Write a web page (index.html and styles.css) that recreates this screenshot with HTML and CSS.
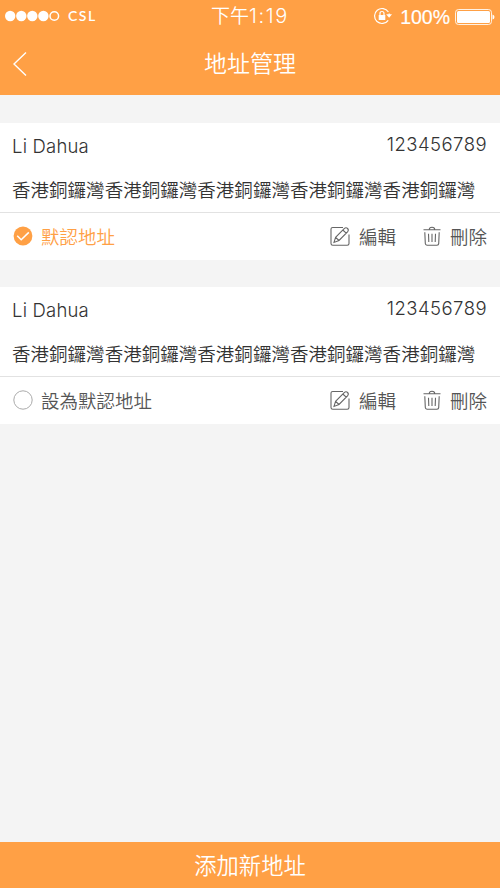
FILE: index.html
```html
<!DOCTYPE html>
<html lang="zh-Hant">
<head>
<meta charset="utf-8">
<title>地址管理</title>
<link rel="stylesheet" href="styles.css">
</head>
<body>
<svg class="defs" width="0" height="0">
  <symbol id="edit" viewBox="0 0 20 20">
    <path d="M13 1.500H2.700Q1 1.500 1 3V17.500Q1 19.200 2.700 19.200H17.300Q19 19.200 19 17.500V8.500"/>
    <path d="M4 16.400L5.600 11.300L14.200 2.600Q16 1 17.600 2.500Q19.100 4 17.500 5.800L9 14.500ZM5.600 11.300L9 14.500M12.800 4L16.200 7.200"/>
  </symbol>
  <symbol id="trash" viewBox="0 0 18 20">
    <path d="M.5 3.700H17.500M6.300 3.500Q6.300 1.200 9 1.200Q11.700 1.200 11.700 3.500M1.800 6.200L2.300 17.600Q2.400 19.200 4 19.200H14Q15.600 19.200 15.700 17.600L16.200 6.200M5.500 7.800L5.800 16M9 7.800V16M12.500 7.800L12.200 16"/>
  </symbol>
</svg>
<div class="screen">
  <header class="header">
    <div class="status">
      <div class="carrier">
        <svg width="56" height="12" viewBox="0 0 56 12"><g fill="#fff"><circle cx="5.200" cy="6" r="5.200"/><circle cx="16.300" cy="6" r="5.200"/><circle cx="27.300" cy="6" r="5.200"/><circle cx="38.400" cy="6" r="5.200"/></g><circle cx="49.300" cy="6" r="4.300" fill="none" stroke="#fff" stroke-width="1.500"/></svg>
        <span class="carrier-name">CSL</span>
      </div>
      <div class="time">下午<span class="clock">1:19</span></div>
      <div class="power">
        <svg class="lock" width="20" height="18" viewBox="0 0 20 18"><path d="M15.400 5A7.500 7.500 0 1 0 15.200 13.300M16.200 8V6.600" fill="none" stroke="#fff" stroke-width="1.200"/><path d="M13.200 7.300H19L16.100 10.800Z" fill="#fff"/><rect x="5.700" y="8" width="6.600" height="5" rx=".5" fill="#fff"/><path d="M7 8V6.500Q7 4.500 9 4.500Q11 4.500 11 6.500V8" fill="none" stroke="#fff" stroke-width="1.200"/></svg>
        <span class="percent">100%</span>
        <svg class="battery" width="40" height="16" viewBox="0 0 40 16"><rect x=".5" y=".5" width="36" height="15" rx="3" fill="none" stroke="#fff" stroke-opacity=".85"/><rect x="2" y="2" width="33" height="12" rx="1.500" fill="#fff"/><path d="M37.500 5.500Q39.500 6 39.500 8Q39.500 10 37.500 10.500Z" fill="#fff"/></svg>
      </div>
    </div>
    <div class="nav">
      <svg class="back" width="14" height="24" viewBox="0 0 14 24"><path d="M13 .5L1 12L13 23.500" fill="none" stroke="#fff" stroke-width="1.400"/></svg>
      <h1 class="title">地址管理</h1>
    </div>
  </header>
  <main class="list">
    <section class="card">
      <div class="info">
        <div class="person"><span class="name">Li Dahua</span><span class="phone">123456789</span></div>
        <div class="address">香港銅鑼灣香港銅鑼灣香港銅鑼灣香港銅鑼灣香港銅鑼灣</div>
      </div>
      <div class="actions">
        <div class="choice selected"><svg width="20" height="20" viewBox="0 0 20 20"><circle cx="10" cy="10" r="9.400" fill="#ffa045"/><path d="M4.200 9.800L8.200 13.800L15.800 6.400" fill="none" stroke="#fff" stroke-width="1.500"/></svg><span>默認地址</span></div>
        <div class="action edit"><svg class="icon" width="20" height="20"><use href="#edit"/></svg><span>編輯</span></div>
        <div class="action"><svg class="icon" width="18" height="20"><use href="#trash"/></svg><span>刪除</span></div>
      </div>
    </section>
    <section class="card">
      <div class="info">
        <div class="person"><span class="name">Li Dahua</span><span class="phone">123456789</span></div>
        <div class="address">香港銅鑼灣香港銅鑼灣香港銅鑼灣香港銅鑼灣香港銅鑼灣</div>
      </div>
      <div class="actions">
        <div class="choice"><svg width="20" height="20" viewBox="0 0 20 20"><circle cx="10" cy="10" r="9.200" fill="#fff" stroke="#aaa"/></svg><span>設為默認地址</span></div>
        <div class="action edit"><svg class="icon" width="20" height="20"><use href="#edit"/></svg><span>編輯</span></div>
        <div class="action"><svg class="icon" width="18" height="20"><use href="#trash"/></svg><span>刪除</span></div>
      </div>
    </section>
  </main>
  <footer class="add">添加新地址</footer>
</div>
</body>
</html>
```
FILE: styles.css
```css
* { box-sizing: border-box; }
body {
  margin: 0;
  background: #f4f4f4;
  color: #333;
  font-family: Inter, "Noto Sans CJK TC", sans-serif;
  font-weight: 350;
  font-size: 18.5px;
}
svg { display: block; flex: none; }
.defs { position: absolute; }
.screen { height: 888px; display: flex; flex-direction: column; }
.header { height: 95px; background: #ffa045; color: #fff; }
.status {
  height: 32px;
  display: grid;
  grid-template-columns: 1fr auto 1fr;
  align-items: center;
  padding: 0 5px;
}
.carrier { display: flex; align-items: center; gap: 7px; }
.carrier-name { font: 600 14px/16px Lato, sans-serif; letter-spacing: 1.5px; }
.time { height: 32px; font-size: 19px; line-height: 33px; }
.clock { font-size: 20px; font-weight: 300; letter-spacing: 1.600px; }
.power { height: 32px; display: flex; align-items: center; justify-content: flex-end; }
.battery { margin-top: 1px; }
.lock { margin-right: 7px; }
.percent { font: 400 19.500px/30px "Liberation Sans", sans-serif; margin-right: 5px; padding-top: 2px; -webkit-text-stroke: .2px #fff; }
.nav {
  height: 63px;
  display: grid;
  grid-template-columns: 1fr auto 1fr;
  align-items: center;
  padding: 0 13px;
}
.title { margin: 0; padding-top: 1px; font-size: 23px; line-height: 62px; font-weight: 350; }
.list { flex: 1; padding-top: 28px; display: flex; flex-direction: column; gap: 27px; }
.card { height: 137px; background: #fff; }
.info { height: 90px; padding: 8px 13px 0 12px; border-bottom: 1px solid #e2e2e2; }
.person { display: flex; justify-content: space-between; line-height: 28px; }
.name { padding-top: 1px; font-weight: 300; letter-spacing: .2px; }
.phone { margin-top: -1px; font-weight: 300; letter-spacing: .45px; }
.address { margin-top: 15px; line-height: 30px; white-space: nowrap; letter-spacing: .03px; }
.actions {
  height: 47px;
  padding: 0 13px 1px;
  display: flex;
  align-items: center;
  color: #555;
}
.choice { display: flex; align-items: center; gap: 8px; margin-right: auto; }
.choice span, .action span { margin-top: -1px; }
.selected { color: #ffa045; }
.action { display: flex; align-items: center; gap: 9px; }
.edit { margin-right: 27px; }
.icon { fill: none; stroke: #666; stroke-width: 1.100; }
.add {
  height: 46px;
  padding-top: 1px;
  background: #ffa045;
  color: #fff;
  font-size: 22.300px;
  line-height: 46px;
  text-align: center;
}
```
